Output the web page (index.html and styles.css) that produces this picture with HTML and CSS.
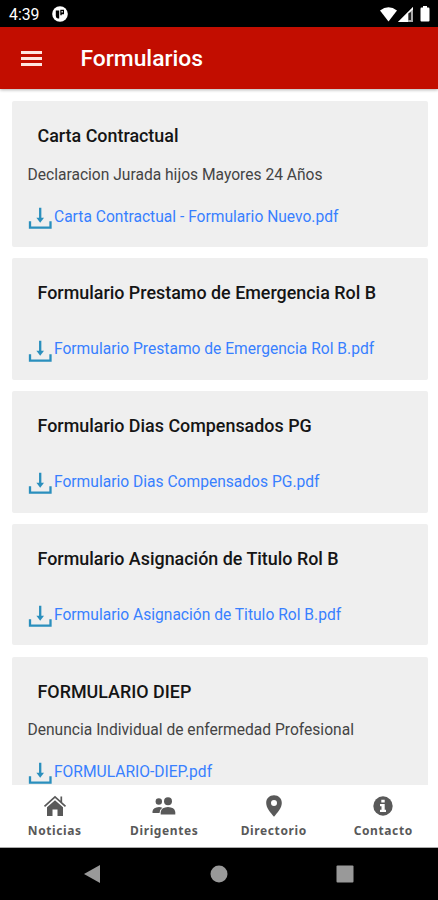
FILE: index.html
```html
<!DOCTYPE html>
<html lang="es">
  <head>
    <meta charset="UTF-8" />
    <meta name="viewport" content="width=device-width, initial-scale=1.0" />
    <title>Formularios</title>
    <link rel="stylesheet" href="styles.css">
  </head>
  <body>
    <svg class="sprite" width="0" height="0">
      <symbol id="download" viewBox="0 0 24 24">
        <path d="M2 15.300v6.400h20.500v-6.400M12.200 1.800v12" fill="none" stroke="currentColor" stroke-width="2.300" />
        <path d="M8.400 11.700h7.600l-3.800 5.100z" fill="currentColor" />
      </symbol>
    </svg>

    <div class="status-bar">
      <span class="clock">4:39</span>
      <svg class="app-icon" width="16" height="16" viewBox="0 0 16 16">
        <circle cx="8" cy="8" r="7.800" fill="#fff" />
        <path d="M3.800 4.500h3.400v8h-1.200q-2.200-.3-2.200-2.500zM8.300 3.800h3.700v4.400H9.700v1H8.300z" fill="#000" />
        <path d="M9.500 5h1.300v1.500H9.500z" fill="#fff" />
      </svg>
      <div class="signals">
        <svg width="17" height="15" viewBox="0 0 17 15">
          <path d="M0 3.400Q8.500-2.800 17 3.400L8.500 14.500z" fill="#fff" />
        </svg>
        <svg width="15" height="15" viewBox="0 0 15 15">
          <path d="M15 0v15H0z" fill="#aaa" />
          <path d="M10 5v10H0zM10 5l5-5v2.500L10 6.500z" fill="#fff" />
          <path d="M10.500 6.500l2.500-1.500v8h-2.500z" fill="#222" />
        </svg>
        <svg class="battery" width="10" height="16" viewBox="0 0 10 16">
          <path d="M3 0h4v1.600h1.500Q9.500 1.600 9.500 3v11.500q0 1-1 1h-7q-1 0-1-1V3q0-1.400 1-1.400H3z" fill="#fff" />
        </svg>
      </div>
    </div>

    <header class="toolbar">
      <div class="menu-button"><span></span><span></span><span></span></div>
      <h1>Formularios</h1>
    </header>

    <main class="content">
      <section class="card">
        <h2>Carta Contractual</h2>
        <p>Declaracion Jurada hijos Mayores 24 Años</p>
        <a href="#"><svg><use href="#download" /></svg><span>Carta Contractual - Formulario Nuevo.pdf</span></a>
      </section>
      <section class="card">
        <h2>Formulario Prestamo de Emergencia Rol B</h2>
        <p></p>
        <a href="#"><svg><use href="#download" /></svg><span>Formulario Prestamo de Emergencia Rol B.pdf</span></a>
      </section>
      <section class="card">
        <h2>Formulario Dias Compensados PG</h2>
        <p></p>
        <a href="#"><svg><use href="#download" /></svg><span>Formulario Dias Compensados PG.pdf</span></a>
      </section>
      <section class="card">
        <h2>Formulario Asignación de Titulo Rol B</h2>
        <p></p>
        <a href="#"><svg><use href="#download" /></svg><span>Formulario Asignación de Titulo Rol B.pdf</span></a>
      </section>
      <section class="card">
        <h2>FORMULARIO DIEP</h2>
        <p>Denuncia Individual de enfermedad Profesional</p>
        <a href="#"><svg><use href="#download" /></svg><span>FORMULARIO-DIEP.pdf</span></a>
      </section>
    </main>

    <nav class="tabs">
      <div class="tab">
        <svg width="24" height="24" viewBox="0 0 24 24">
          <path d="M12 6.300l8 7v8.700h-5.500v-6.500h-5v6.500H4v-8.700z" />
          <path d="M1.500 12.300L12 2.800l10.500 9.500M18.300 2.500v6" fill="none" stroke="currentColor" stroke-width="1.700" />
        </svg>
        <span>Noticias</span>
      </div>
      <div class="tab">
        <svg width="24" height="24" viewBox="0 0 24 24">
          <circle cx="6.800" cy="7.500" r="3.200" />
          <circle cx="16" cy="7.200" r="4" />
          <path d="M.5 19v-1.700Q1.200 13.400 7 13.100q2 0 3.300.6Q7.800 15.300 7.500 19zM8.700 20.500v-2.500q.8-4.700 7.300-4.900 6.500.2 7.300 4.900v2.500z" />
        </svg>
        <span>Dirigentes</span>
      </div>
      <div class="tab">
        <svg width="24" height="24" viewBox="0 0 24 24">
          <path fill-rule="evenodd" d="M12 1.300c-4.500 0-7.800 3.300-7.800 7.600 0 4.900 4.400 9.600 7.800 13.800 3.400-4.200 7.800-8.900 7.800-13.800 0-4.300-3.300-7.600-7.800-7.600zm0 4.700a3 3 0 1 1 0 6 3 3 0 0 1 0-6z" />
        </svg>
        <span>Directorio</span>
      </div>
      <div class="tab">
        <svg width="24" height="24" viewBox="0 0 24 24">
          <circle cx="12" cy="12" r="9.700" />
          <path d="M10.300 5.700h3.400v2.800h-3.400zM9 10h4.700v5.700H15V18H9v-2.300h1.500v-3.400H9z" fill="#fff" />
        </svg>
        <span>Contacto</span>
      </div>
    </nav>

    <div class="system-nav">
      <svg width="18" height="18" viewBox="0 0 18 18"><path d="M17 0v18L1 9z" /></svg>
      <svg width="18" height="18" viewBox="0 0 18 18"><circle cx="9" cy="9" r="8.500" /></svg>
      <svg width="18" height="18" viewBox="0 0 18 18"><rect x=".5" y=".5" width="17" height="17" rx="1" /></svg>
    </div>
  </body>
</html>
```
FILE: styles.css
```css
* {
  box-sizing: border-box;
}

body {
  display: flex;
  flex-direction: column;
  height: 100vh;
  margin: 0;
  overflow: hidden;
  background-color: #fff;
  font-family: Roboto, sans-serif;
}

h1,
h2,
p {
  margin: 0;
}

.sprite {
  display: none;
}

/* Android status bar */
.status-bar {
  display: flex;
  align-items: center;
  flex: 0 0 27px;
  padding: 1px 8px 0 9px;
  background-color: #000;
  color: #fff;
}

.clock {
  width: 43px;
  font-size: 15.8px;
}

.signals {
  display: flex;
  align-items: center;
  gap: 1px;
  margin-left: auto;
}

.battery {
  margin-left: 6px;
}

/* Header */
.toolbar {
  display: flex;
  align-items: center;
  flex: 0 0 62px;
  padding-left: 21px;
  background-color: #c20d00;
  color: #fff;
  box-shadow: 0 1px 3px rgba(0, 0, 0, 0.3);
  z-index: 1;
}

.menu-button {
  display: flex;
  flex-direction: column;
  gap: 3px;
  width: 59.5px;
}

.menu-button span {
  width: 21px;
  height: 3px;
  background-color: #ffe4e0;
}

.toolbar h1 {
  font-size: 22.8px;
  font-weight: 500;
}

/* Forms list */
.content {
  display: flex;
  flex-direction: column;
  gap: 11.4px;
  flex: 1 1 0;
  min-height: 0;
  padding: 12px 10.5px 0 12px;
  overflow: hidden;
}

.card {
  flex-shrink: 0;
  padding: 23px 15.5px 16px;
  background-color: #efefef;
  border-radius: 2px;
}

.card h2 {
  padding-left: 10px;
  font-size: 17.9px;
  font-weight: 500;
  line-height: 24px;
  color: #151515;
}

.card p {
  margin-top: 14.5px;
  font-size: 15.6px;
  line-height: 24px;
  color: #444;
}

.card p:empty {
  margin-top: 29.4px;
}

.card a {
  display: flex;
  align-items: center;
  height: 29px;
  margin-top: 15.5px;
  color: #3880ff;
  font-size: 15.6px;
  text-decoration: none;
  white-space: nowrap;
}

.card a svg {
  width: 24px;
  height: 24px;
  margin: 2.5px 2.2px 0 0.3px;
  color: #2a8fbd;
}

/* Bottom tabs */
.tabs {
  display: flex;
  flex: 0 0 63px;
  background-color: #fff;
  border-bottom: 1px solid #aaa;
}

.tab {
  display: flex;
  flex-direction: column;
  align-items: center;
  flex: 1;
  padding-top: 9px;
  color: #595959;
  fill: currentColor;
}

.tab span {
  margin-top: 5px;
  font-family: "Noto Sans", sans-serif;
  font-size: 12px;
  font-weight: 700;
  line-height: 16px;
  letter-spacing: 0.6px;
}

/* Android navigation */
.system-nav {
  display: flex;
  justify-content: space-between;
  align-items: center;
  flex: 0 0 52px;
  padding: 0 84px 0 83px;
  background-color: #000;
  fill: #999;
}
```
